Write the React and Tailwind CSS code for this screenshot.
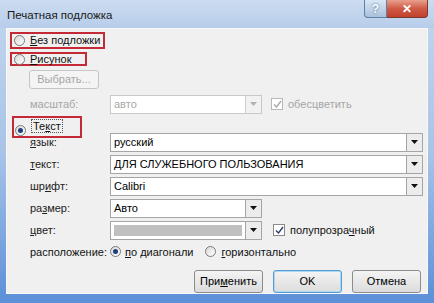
import React from 'react';

const font = { fontFamily: '"Liberation Sans", Arial, sans-serif' };

const Radio = ({ checked, disabled }) => (
  <span
    className={`inline-flex h-[11px] w-[11px] shrink-0 items-center justify-center rounded-full border ${
      disabled ? 'border-[#b8b8b8]' : 'border-[#7a7a7a]'
    } bg-gradient-to-br from-[#d8d8d8] to-[#ffffff]`}
  >
    {checked && <span className="h-[5px] w-[5px] rounded-full bg-[#1d3f7a]" />}
  </span>
);

const Check = ({ disabled }) => (
  <span
    className={`inline-flex h-[12px] w-[12px] shrink-0 items-center justify-center border ${
      disabled ? 'border-[#b8b8b8]' : 'border-[#8a8a8a]'
    } bg-white`}
  >
    <svg width="9" height="9" viewBox="0 0 9 9">
      <path
        d="M1 4.5 L3.5 7 L8 1"
        fill="none"
        stroke={disabled ? '#a8a8a8' : '#2b3d6a'}
        strokeWidth="1.4"
      />
    </svg>
  </span>
);

const Select = ({ wide, value, disabled, swatch }) => (
  <div
    className={`flex h-[19px] shrink-0 items-stretch border ${wide ? 'w-[313px]' : 'w-[152px]'} ${
      disabled ? 'border-[#c8c8c8]' : 'border-[#a5a5a5]'
    } bg-white`}
  >
    <div className={`flex min-w-0 flex-1 items-center px-[3px] ${disabled ? 'text-[#a8a8a8]' : 'text-black'}`}>
      {swatch ? <div className="h-[11px] w-full bg-[#c0c0c0]" /> : value}
    </div>
    <div
      className={`flex w-[16px] shrink-0 items-center justify-center border-l ${
        disabled ? 'border-[#d0d0d0] bg-[#f2f2f2]' : 'border-[#a5a5a5] bg-[#ececec]'
      }`}
    >
      <svg width="7" height="4" viewBox="0 0 7 4">
        <path d="M0 0 H7 L3.5 4 Z" fill={disabled ? '#b0b0b0' : '#111'} />
      </svg>
    </div>
  </div>
);

const Row = ({ label, children, disabled }) => (
  <div className="flex items-center">
    <div className={`w-[101px] shrink-0 pl-[21px] ${disabled ? 'text-[#a6a6a6]' : 'text-[#222]'}`}>{label}</div>
    {children}
  </div>
);

const Btn = ({ children, primary }) => (
  <div
    className={`flex h-[23px] w-[69px] items-center justify-center rounded-[3px] border ${
      primary ? 'border-[#5a9ad0] shadow-[inset_0_0_0_1px_#a8daf4]' : 'border-[#8c8c8c]'
    } bg-gradient-to-b from-[#f4f4f4] to-[#dcdcdc] text-black`}
  >
    {children}
  </div>
);

export default function App() {
  return (
    <div
      className="flex h-[303px] w-[434px] flex-col bg-gradient-to-b from-[#c3d6ee] via-[#a9c4e8] to-[#5b8fd8] text-[11px]"
      style={font}
    >
      {/* title bar */}
      <div className="flex h-[28px] shrink-0 items-start bg-gradient-to-b from-[#cddcef] to-[#b6cdea]">
        <div className="pl-[7px] pt-[7px] text-[11.5px] text-[#1a1a1a]">Печатная подложка</div>
        <div className="ml-auto mr-[6px] flex">
          <div className="flex h-[18px] w-[23px] items-center justify-center rounded-bl-[4px] border border-t-0 border-[#5f7ea8] bg-gradient-to-b from-[#d9e6f4] to-[#a9c0dc] text-[12px] font-bold text-white [text-shadow:0_0_2px_#3a5a88]">
            ?
          </div>
          <div className="flex h-[18px] w-[41px] items-center justify-center rounded-br-[4px] border border-l-0 border-t-0 border-[#7a3a30] bg-gradient-to-b from-[#e8a08e] via-[#cf5a45] to-[#c0412c] text-[12px] font-bold text-white">
            ✕
          </div>
        </div>
      </div>

      {/* content */}
      <div className="mx-[6px] flex h-[266px] flex-col border border-[#f8f8f8] bg-[#f0f0f0] pl-[2px]">
        <div className="ml-[1px] mt-[3px] flex h-[17px] w-[95px] items-center gap-[5px] border-2 border-[#c42a36] pl-[2px] text-[#111]">
          <Radio />
          <span>
            <u>Б</u>ез подложки
          </span>
        </div>
        <div className="ml-[1px] mt-[3px] flex h-[14px] w-[77px] items-center gap-[5px] border-2 border-[#c42a36] pl-[2px] text-[#111]">
          <Radio />
          <span>
            <u>Р</u>исунок
          </span>
        </div>
        <div className="ml-[20px] mt-[4px] flex h-[20px] w-[70px] items-center justify-center rounded-[3px] border border-[#c6c6c6] bg-[#f4f4f4] text-[#a6a6a6]">
          Выбрать...
        </div>
        <div className="mt-[6px]">
          <Row label="масштаб:" disabled>
            <Select value="авто" disabled />
            <div className="ml-[9px] flex items-center gap-[5px] text-[#a6a6a6]">
              <Check disabled />
              <span>обесцветить</span>
            </div>
          </Row>
        </div>
        <div className="relative z-10 mb-[-5px] ml-[3px] mt-[2px] flex h-[22px] w-[70px] items-start gap-[5px] border-2 border-[#c42a36] pl-[1px] pt-[1px] text-[#111]">
          <span className="mt-[2px]">
            <Radio checked />
          </span>
          <span className="border border-dotted border-[#555] px-[1px] leading-[12px]">
            Те<u>к</u>ст
          </span>
        </div>
        <div className="flex flex-col gap-[3px]">
          <Row label={<><u>я</u>зык:</>}>
            <Select wide value="русский" />
          </Row>
          <Row label={<><u>т</u>екст:</>}>
            <Select wide value="ДЛЯ СЛУЖЕБНОГО ПОЛЬЗОВАНИЯ" />
          </Row>
          <Row label={<>шр<u>и</u>фт:</>}>
            <Select wide value="Calibri" />
          </Row>
          <Row label={<>ра<u>з</u>мер:</>}>
            <Select value="Авто" />
          </Row>
          <Row label={<><u>ц</u>вет:</>}>
            <Select swatch />
            <div className="ml-[11px] flex items-center gap-[5px] text-[#111]">
              <Check />
              <span>
                полупрозра<u>ч</u>ный
              </span>
            </div>
          </Row>
        </div>
        <div className="mt-[4px] flex items-center text-[#111]">
          <div className="w-[101px] shrink-0 pl-[21px]">расположение:</div>
          <div className="flex items-center gap-[4px]">
            <Radio checked />
            <span>
              <u>п</u>о диагонали
            </span>
          </div>
          <div className="ml-[12px] flex items-center gap-[5px]">
            <Radio />
            <span>
              <u>г</u>оризонтально
            </span>
          </div>
        </div>
        <div className="mr-[6px] mt-[10px] flex justify-end gap-[10px]">
          <Btn>
            <span>
              При<u>м</u>енить
            </span>
          </Btn>
          <Btn primary>OK</Btn>
          <Btn>Отмена</Btn>
        </div>
      </div>
    </div>
  );
}
